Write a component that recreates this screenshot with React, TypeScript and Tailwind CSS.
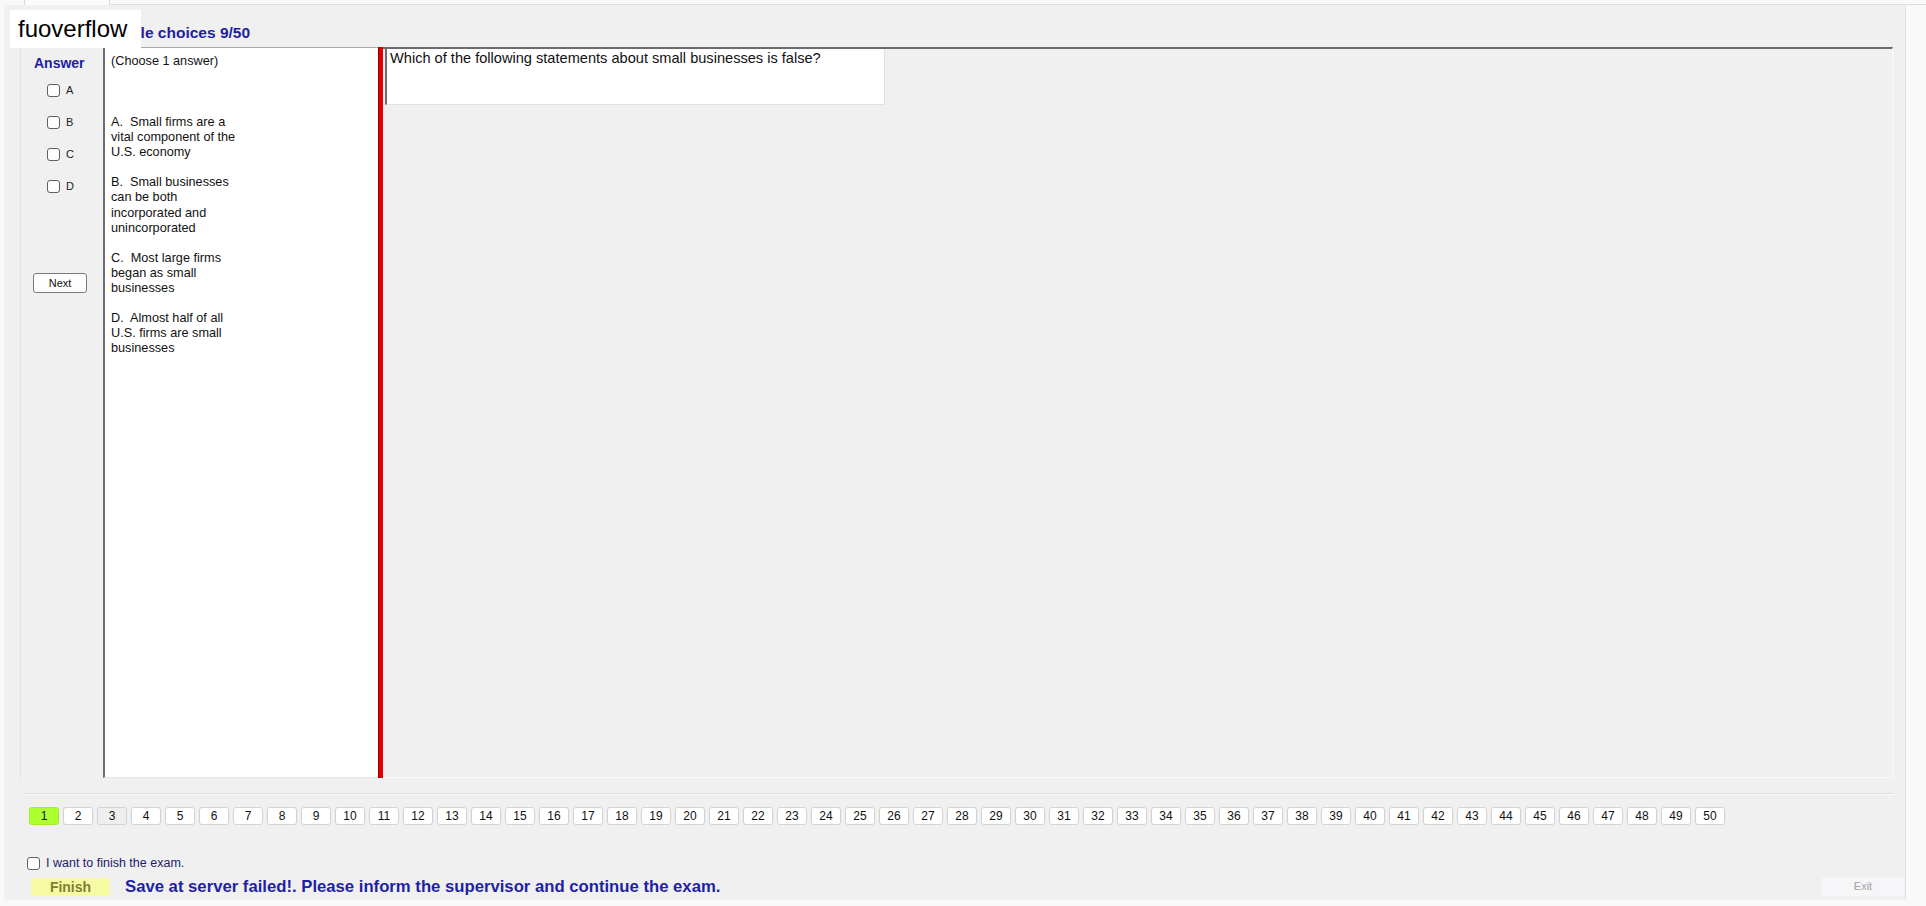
const QUESTION_COUNT = 50

const OPTIONS = [
  'A.  Small firms are a vital component of the U.S. economy',
  'B.  Small businesses can be both incorporated and unincorporated',
  'C.  Most large firms began as small businesses',
  'D.  Almost half of all U.S. firms are small businesses',
]

function Box({ className = '' }: { className?: string }) {
  return <span className={`block h-[13px] w-[13px] shrink-0 rounded-[3px] border border-[#5f5f5f] bg-white ${className}`} />
}

export default function App() {
  const pages = Array.from({ length: QUESTION_COUNT }, (_, i) => i + 1)

  return (
    <div className="relative h-[906px] w-[1926px] overflow-hidden bg-[#f9f9f9] font-['Liberation_Sans',Arial,sans-serif] text-black">
      {/* tab strip, mostly cut off */}
      <div className="flex h-[5px]">
        <div className="ml-[24px] w-[86px] border-x border-[#dadada] bg-[#fbfbfb]" />
        <div className="flex-1 border-b border-[#dedede]" />
      </div>

      <div className="ml-[4px] flex h-[895px] w-[1902px] flex-col border-r border-[#e4e4e4] bg-[#f0f0f0]">
        {/* group title */}
        <div className="h-[42px] pl-[91px] pt-[19px] text-[15.5px] font-bold leading-[18px] text-[#1e1ea0]">
          Multiple choices 9/50
        </div>

        {/* main panel */}
        <div className="ml-[16px] flex h-[731px] w-[1873px]">
          <div className="flex w-[83px] flex-col border-l border-[#e2e2e2] pl-[13px] pt-[8px]">
            <div className="text-[14px] font-bold leading-[16px] text-[#1e1ea0]">Answer</div>
            <div className="mt-[13px] flex flex-col gap-[19px] pl-[13px]">
              {['A', 'B', 'C', 'D'].map((l) => (
                <label key={l} className="flex h-[13px] items-center gap-[6px] text-[11px] leading-none text-[#222]">
                  <Box />
                  {l}
                </label>
              ))}
            </div>
            <button className="ml-[-1px] mt-[80px] h-[20px] w-[54px] rounded-[3px] border border-[#7a7a7a] bg-[#fdfdfd] text-[11px] leading-none text-[#111]">
              Next
            </button>
          </div>

          <div className="w-[275px] border-b border-l-2 border-t border-b-[#e6e6e6] border-l-[#6e6e6e] border-t-[#a9a9a9] bg-white pl-[6px] pt-[6px] text-[12.7px] leading-[15.1px] text-[#111]">
            <div>(Choose 1 answer)</div>
            <div className="mt-[46px] flex w-[138px] flex-col gap-[15px]">
              {OPTIONS.map((o) => (
                <div key={o} className="whitespace-pre-wrap">
                  {o}
                </div>
              ))}
            </div>
          </div>

          <div className="w-[5px] border-l border-[#8a0000] bg-[#e00000]" />

          <div className="flex-1 border-b border-r border-t-2 border-b-[#fafafa] border-r-[#fafafa] border-t-[#6b6b6b] bg-[#f0f0f0]">
            <div className="ml-[2px] h-[56px] w-[500px] border-b border-l-2 border-r border-b-[#e2e2e2] border-l-[#6e6e6e] border-r-[#e2e2e2] bg-white pl-[3px] pt-[1px] text-[14.6px] leading-[17px] text-[#111]">
              Which of the following statements about small businesses is false?
            </div>
          </div>
        </div>

        {/* group bottom edge */}
        <div className="ml-[19px] mt-[15px] h-[2px] w-[1870px] border-b border-t border-b-[#fbfbfb] border-t-[#dcdcdc]" />

        {/* question buttons */}
        <div className="ml-[25px] mt-[12px] flex gap-[4px]">
          {pages.map((n) => (
            <button
              key={n}
              className={`h-[18px] w-[30px] rounded-[3px] border text-[12px] leading-none text-[#111] ${
                n === 1
                  ? 'border-[#a6e82c] bg-[#adff2f]'
                  : n === 3
                    ? 'border-[#d2d2d2] bg-[#efefef]'
                    : 'border-[#d2d2d2] bg-white'
              }`}
            >
              {n}
            </button>
          ))}
        </div>

        <label className="ml-[23px] mt-[31px] flex h-[15px] items-center gap-[6px] text-[12.5px] leading-none text-[#1b1b6b]">
          <Box />
          I want to finish the exam.
        </label>

        <div className="mt-[6px] flex h-[19px] items-center">
          <button className="ml-[27px] h-[18px] w-[79px] bg-[#f6fba3] text-[14px] font-bold leading-none text-[#7f7f32]">
            Finish
          </button>
          <div className="ml-[15px] text-[16.7px] font-bold leading-[18px] text-[#1f1fa8]">
            Save at server failed!. Please inform the supervisor and continue the exam.
          </div>
          <button className="ml-auto mr-[1px] h-[19px] w-[82px] bg-[#f6f5f7] text-[11px] leading-none text-[#a4a4a4]">
            Exit
          </button>
        </div>
      </div>

      {/* watermark */}
      <div className="absolute left-[10px] top-[10px] h-[38px] w-[131px] bg-white pl-[8px] pt-[3px] text-[24px] leading-[32px] text-black">
        fuoverflow
      </div>
    </div>
  )
}
